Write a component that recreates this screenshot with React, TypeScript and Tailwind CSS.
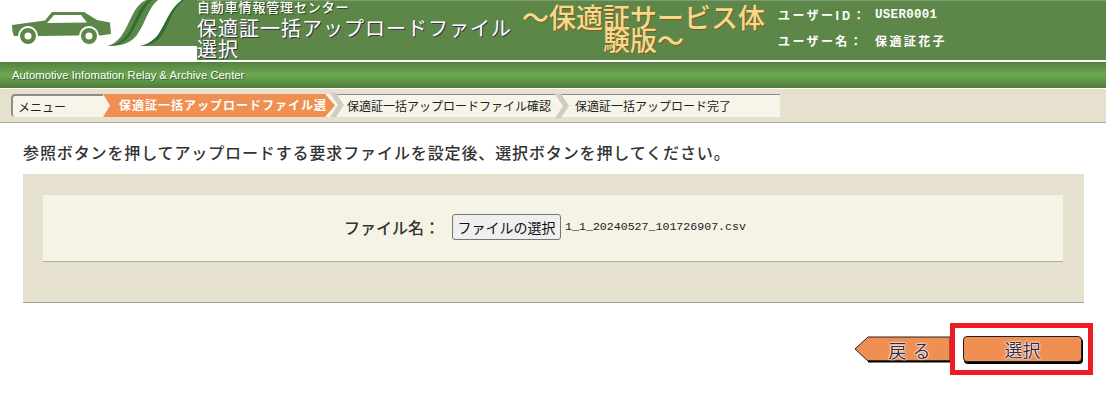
const jp = "font-['Noto_Sans_CJK_JP','Noto_Sans_CJK_SC',sans-serif]";

function Logo() {
  return (
    <svg width="197" height="60" viewBox="0 0 197 60" className="block shrink-0">
      <rect width="197" height="60" fill="#fff" />
      <path d="M12 25 L45 20.5 L52 12 L84 12 L97 20 L110 22.5 L111 34 L100 35.5 L78 35.5 L40 36 L14 36 Q12 32 12 25 Z" fill="#5c8748" />
      <path d="M47 23 L54 15 L81 15 L87 22.5 Z" fill="#fff" />
      <circle cx="28" cy="36" r="10" fill="#fff" />
      <circle cx="28" cy="36" r="8" fill="#5c8748" />
      <circle cx="28" cy="36" r="3.5" fill="#fff" />
      <circle cx="89" cy="36" r="10" fill="#fff" />
      <circle cx="89" cy="36" r="8" fill="#5c8748" />
      <circle cx="89" cy="36" r="3.5" fill="#fff" />
      <path d="M146 0 C133 6 130 24 122 35 C118 41 112 45 107 46 C120 46 130 44 137 35 C146 22 148 8 158 0 Z" fill="#5c8748" />
      <path d="M149 0 C138 7 135 24 127 35 C122 41 116 45 109 46 C118 46 125 42 130 35 C138 24 142 8 152 0 Z" fill="#2f6b33" />
      <path d="M182 0 C170 8 165 25 158 35 C152 42 146 45 140 46 L197 46 L197 0 Z" fill="#5c8748" />
      <path d="M182 0 C170 8 165 25 158 35 C152 42 146 45 140 46 C150 46 157 42 162 35 C169 25 172 8 184 0 Z" fill="#2f6b33" />
    </svg>
  );
}

function Chevron() {
  return (
    <svg width="14" height="24" viewBox="0 0 14 24" className="absolute right-[-9px] top-[-1px] z-10">
      <path d="M0 0 L6 0 L14 12 L6 24 L0 24 L8 12 Z" fill="#d2cdbc" />
    </svg>
  );
}

function BackShape() {
  return (
    <svg width="96" height="27" viewBox="0 0 96 27" className="absolute left-[-1px] top-0">
      <path d="M1 13 L14 1 L96 1 L96 25 L14 25 Z" fill="#f08f52" stroke="#222" strokeWidth="1" />
      <path d="M14 25.5 L96 25.5" stroke="#000" strokeWidth="2" />
    </svg>
  );
}

const halo = "[text-shadow:0_0_2px_#fff,0_0_2px_#fff,0_0_1px_#fff,0_0_1px_#fff]";

export default function App() {
  return (
    <div className={`${jp} min-h-[401px] w-[1106px] overflow-hidden bg-white text-[#333]`}>
      <header className="flex h-[60px]">
        <Logo />
        <div className="flex flex-1 border-t border-[#7e9b70] bg-[#5c8748]">
          <div className="-mt-px w-[315px] shrink-0 text-white">
            <div className="h-[17px] text-[13px] leading-[14px] font-medium tracking-[0.85px] [text-shadow:1px_1px_0_#2e4a22]">自動車情報管理センター</div>
            <div className="text-[20px] leading-[21px] tracking-[1px] [text-shadow:1px_1px_0_#40304a]">保適証一括アップロードファイル選択</div>
          </div>
          <div className="mt-[4px] w-[263px] shrink-0 text-center text-[27px] leading-[23px] font-medium text-[#f8d88a] [text-shadow:1px_1px_0_#7a5a20]">
            ～保適証サービス体験版～
          </div>
          <div className="ml-[3px] pt-[7px] text-[12px] leading-[14px] font-bold text-white">
            <div className="flex">
              <span className="w-[97px] tracking-[2.4px]">ユーザーID：</span>
              <span className="font-['Liberation_Mono',monospace] text-[12.5px] tracking-[0.3px]">USER0001</span>
            </div>
            <div className="mt-[12px] flex">
              <span className="w-[97px] tracking-[2.4px]">ユーザー名：</span>
              <span className="tracking-[2.4px]">保適証花子</span>
            </div>
          </div>
        </div>
      </header>

      <div className="mt-[2px] flex h-[26px] items-center bg-[linear-gradient(#568043,#6aa84f_50%,#4f7d3c)] pl-[12px] font-['Liberation_Sans',sans-serif] text-[11.3px] text-white [text-shadow:1px_1px_0_#3d6530]">
        Automotive Infomation Relay &amp; Archive Center
      </div>

      <nav className="mt-[1px] h-[34px] border-b border-[#a8a8a0] bg-[#e6e0cf] pt-[5px] pl-[11px]">
        <div className="flex h-[23px] w-[769px] rounded-l-[4px] bg-[#f7f5ea] text-[12px] leading-[22px] text-[#222]">
          <div className="w-[92px] rounded-tl-[4px] rounded-bl-[4px] border-t-2 border-l-2 border-[#8f8c82] pl-[5px]">
            メニュー
          </div>
          <div className="relative w-[232px]">
            <div className="h-full bg-[#f08f52] pl-[16px] font-bold text-white [clip-path:polygon(0_0,222px_0,100%_50%,222px_100%,0_100%,7px_50%)]">
              <div className="w-[208px] overflow-hidden tracking-[1px] whitespace-nowrap">保適証一括アップロードファイル選択</div>
            </div>
            <Chevron />
          </div>
          <div className="relative w-[225px] border-t border-[#8f8c82] pl-[12px] whitespace-nowrap">
            保適証一括アップロードファイル確認
            <Chevron />
          </div>
          <div className="flex-1 border-t border-[#8f8c82] pl-[15px] whitespace-nowrap">
            保適証一括アップロード完了
          </div>
        </div>
      </nav>

      <p className="mt-[18px] ml-[23px] text-[16px] leading-[22px] font-medium tracking-[0.88px] text-[#333]">
        参照ボタンを押してアップロードする要求ファイルを設定後、選択ボタンを押してください。
      </p>

      <section className="mt-[11px] ml-[23px] h-[129px] w-[1061px] border-b border-[#9c9c9c] bg-[#e6e0cf] pt-[21px] pr-[21px] pl-[20px]">
        <div className="flex h-[67px] items-center justify-center border-b border-[#b0ab9c] bg-[#f5f3e5] pr-[16px] pb-[2px]">
          <span className="mr-[12px] text-[16px] font-medium text-[#333]">ファイル名：</span>
          <button className="h-[26px] w-[109px] rounded-[3px] border border-[#767676] bg-[#efefef] text-[14px] leading-none text-[#111]">
            ファイルの選択
          </button>
          <span className="ml-[4px] font-['Liberation_Mono',monospace] text-[11.6px] text-[#222]">1_1_20240527_101726907.csv</span>
        </div>
      </section>

      <div className="relative mt-[33px] ml-[855px] flex h-[27px] w-[229px]">
        <button className="relative h-[27px] w-[95px] text-[18px] leading-[24px] text-[#3a2a3a]">
          <BackShape />
          <span className={`relative ml-[20px] tracking-[6px] ${halo}`}>戻る</span>
        </button>
        <button className={`ml-[13px] h-[26px] w-[119px] rounded-[4px] border border-[#222] bg-[#f08f52] text-[18px] leading-[22px] text-[#3a2a3a] shadow-[1px_2px_0_#000] ${halo}`}>
          選択
        </button>
        <div className="absolute left-[95px] top-[-13px] h-[52px] w-[143px] border-[5px] border-[#ed1c24]" />
      </div>
    </div>
  );
}
